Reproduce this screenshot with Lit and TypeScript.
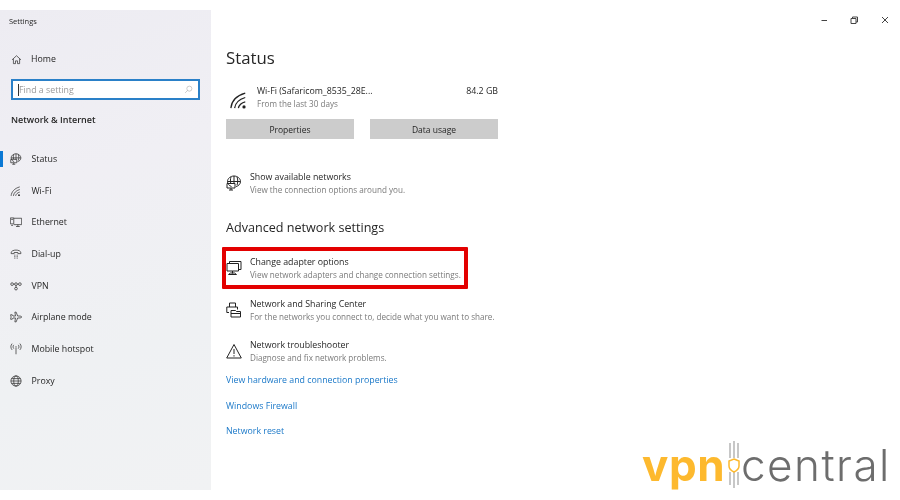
import { LitElement, html, css, svg } from "lit";
import { customElement } from "lit/decorators.js";

const icons: Record<string, unknown> = {
  home: svg`<path d="M1.500 8.500 8 2.500l6.500 6M3.500 7V14H6.500V10H9.500V14H12.500V7"/>`,
  status: svg`<path d="M5.500 11.500C3 10.800 1.500 8.500 1.500 6.500 1.500 3.500 4.500 1 8 1S14.500 3.500 14.500 6.500C14.500 9 12.500 11 10 11.500"/><path d="M1.500 6.500H14.500M8 1V9M5 2C4.300 4 4.300 6 4.700 8M11 2C12 4.500 12 7.500 11 10"/><path d="M1 8.500H9V13H1ZM3 15H7M5 13V15"/>`,
  wifi: svg`<path d="M1.500 14.500C2 9 6 4.500 13 2.500M4.500 14.500C5 10.500 8 7.500 13 6M7.500 14.500C7.800 12.500 10 10 13 9.500"/><circle cx="12" cy="13.500" r="1.300" fill="currentColor" stroke="none"/>`,
  ethernet: svg`<path d="M5 3H15.500V11.500H5M8 14H13M10.500 11.500V14"/><path d="M.5 2.500H5V10.500H.5ZM1.500 12.500H4M1.500 4.500H4"/>`,
  dial: svg`<path d="M1.500 6.500C1.500 1.500 14.500 1.500 14.500 6.500V7.500H10.500V6H5.500V7.500H1.500Z"/><path d="M5.500 9.500H6.500M7.500 9.500H8.500M9.500 9.500H10.500M5.500 11.500H6.500M7.500 11.500H8.500M9.500 11.500H10.500M5.500 13.500H6.500M7.500 13.500H8.500M9.500 13.500H10.500"/>`,
  vpn: svg`<circle cx="2.800" cy="5.500" r="1.800"/><circle cx="13.200" cy="5.500" r="1.800"/><circle cx="8" cy="5.500" r="1.800"/><circle cx="8" cy="11.500" r="1.800"/><path d="M8 7.300V9.700M4.600 5.500H6.200M9.800 5.500H11.400"/>`,
  plane: svg`<path d="M15.500 8C15.500 7 14 6.700 12 6.700H10.200L8.200 1.500H6.500L7.300 6.700H4L3 5H.8L1.500 8 .8 11H3L4 9.300H7.300L6.500 14.500H8.200L10.200 9.300H12C14 9.300 15.500 9 15.500 8Z"/>`,
  hotspot: svg`<path d="M8 6V15"/><circle cx="8" cy="5" r=".8" fill="currentColor" stroke="none"/><path d="M5 2.500C3.800 4 3.800 6 5 7.500M11 2.500C12.200 4 12.200 6 11 7.500M2.800 .8C.6 3.500.6 6.500 2.800 9.200M13.200 .8C15.400 3.500 15.400 6.500 13.200 9.200"/>`,
  globe: svg`<circle cx="8" cy="8" r="6.800"/><ellipse cx="8" cy="8" rx="3" ry="6.800"/><path d="M1.200 8H14.800M2.200 4.800H13.800M2.200 11.200H13.800"/>`,
  monitor: svg`<path d="M3.500 3.500V1.500H15V9.500H12.500"/><path d="M1 3.500H12.500V11H1ZM6.500 11V13.500M2.500 14.500H10.500L8.500 13H4.500Z"/>`,
  share: svg`<path d="M3.500 5V1H9.500V5"/><path d="M3 10.500H.8V5H11.500V7.500"/><path d="M5 8.500H9.500L10.500 9.500H14.500V15H5ZM5 11.500H14.500"/>`,
  warning: svg`<path d="M8 1.500 15.300 15H.7ZM8 6V11M8 12.200V13.500"/>`,
  search: svg`<circle cx="9.500" cy="6.500" r="4.500"/><path d="M6.300 9.700 2 14"/>`,
};

const icon = (name: string, size = 16) =>
  html`<svg class="ico" width=${size} height=${size} viewBox="0 0 16 16">${icons[name]}</svg>`;

const navItems = [
  ["status", "Status"],
  ["wifi", "Wi-Fi"],
  ["ethernet", "Ethernet"],
  ["dial", "Dial-up"],
  ["vpn", "VPN"],
  ["plane", "Airplane mode"],
  ["hotspot", "Mobile hotspot"],
  ["globe", "Proxy"],
];

@customElement("app-root")
export class AppRoot extends LitElement {
  static styles = css`
    :host {
      display: block;
      position: relative;
      width: 900px;
      height: 500px;
      overflow: hidden;
      background: #fff;
      font-family: "Open Sans", "Noto Sans", sans-serif;
      font-size: 8.800px;
      color: #262626;
      filter: blur(0.4px);
    }
    .ico {
      fill: none;
      stroke: currentColor;
      stroke-width: 1;
      flex: none;
      display: block;
    }
    .window {
      display: flex;
      height: 500px;
      padding: 10px 0;
      box-sizing: border-box;
    }

    /* left pane */
    .side {
      width: 211px;
      flex: none;
      background: linear-gradient(160deg, #edecf2 0%, #f0eff4 35%, #eff1f3 70%, #f1f2f3 100%);
      display: flex;
      flex-direction: column;
    }
    .app-title {
      font-size: 7.500px;
      height: 22px;
      line-height: 22px;
      padding-left: 9px;
      margin-bottom: 16px;
    }
    .home {
      display: flex;
      align-items: center;
      gap: 9px;
      height: 22px;
      padding-left: 11px;
    }
    .home .ico {
      width: 11px;
      height: 11px;
    }
    .search {
      margin: 9px 0 0 11px;
      width: 189px;
      height: 21px;
      box-sizing: border-box;
      border: 2px solid #2a80c8;
      background: #fff;
      display: flex;
      align-items: center;
      justify-content: space-between;
      padding: 0 5px 0 5px;
      color: #9a9a9a;
    }
    .search span {
      border-left: 1px solid #333;
      line-height: 12px;
    }
    .search .ico {
      width: 9px;
      height: 9px;
      color: #a5a5a5;
    }
    .section {
      font-size: 9px;
      font-weight: 600;
      padding-left: 11px;
      height: 14px;
      line-height: 14px;
      margin: 13px 0 16px;
    }
    .nav {
      display: flex;
      flex-direction: column;
    }
    .nav-row {
      position: relative;
      display: flex;
      align-items: center;
      gap: 9.500px;
      height: 31.700px;
      padding-left: 10px;
    }
    .nav-row .ico {
      width: 12px;
      height: 12px;
      color: #333;
    }
    .nav-row.on::before {
      content: "";
      position: absolute;
      left: 0;
      top: 8px;
      width: 3px;
      height: 16px;
      background: #0a78d4;
    }

    /* right pane */
    .main {
      flex: 1;
      display: flex;
      flex-direction: column;
      padding-left: 15px;
      position: relative;
    }
    h1 {
      margin: 34px 0 0;
      font-size: 16.800px;
      font-weight: 400;
      line-height: 28px;
    }
    .usage {
      width: 272px;
      height: 26px;
      margin-top: 12px;
      display: flex;
      gap: 8px;
      align-items: flex-end;
    }
    .usage .ico {
      width: 20px;
      height: 20px;
      color: #222;
      margin-left: 3px;
    }
    .usage-text {
      flex: 1;
      display: flex;
      justify-content: space-between;
      align-self: stretch;
    }
    .t {
      line-height: 13px;
      margin-top: 1px;
    }
    .s {
      line-height: 13px;
      margin-top: -1px;
      color: #7a7a7a;
      font-size: 8.150px;
    }
    .btns {
      display: flex;
      gap: 16px;
      margin-top: 9px;
    }
    .btn {
      width: 128px;
      height: 20px;
      line-height: 21px;
      text-align: center;
      background: #cccccc;
      font-size: 8.500px;
    }
    .opt {
      display: flex;
      align-items: center;
      gap: 8px;
      height: 26px;
      width: 280px;
    }
    .opt .ico {
      width: 16px;
      height: 16px;
      color: #222;
    }
    .first {
      margin-top: 31px;
    }
    h2 {
      margin: 19.500px 0 0;
      font-size: 12.600px;
      font-weight: 400;
      line-height: 24px;
      height: 24px;
    }
    .hl {
      position: relative;
      margin-top: 7px;
      height: 42px;
    }
    .hl::after {
      content: "";
      position: absolute;
      left: -4px;
      top: 0;
      width: 246px;
      height: 42px;
      box-sizing: border-box;
      border: 4px solid #e30000;
      border-radius: 1px;
    }
    .next {
      margin-top: 8px;
    }
    .next2 {
      margin-top: 15.500px;
    }
    a {
      color: #1a78c8;
      display: block;
      line-height: 13px;
      text-decoration: none;
    }
    .links {
      display: flex;
      flex-direction: column;
      gap: 12.700px;
      margin-top: 10px;
    }

    /* watermark */
    .logo {
      position: absolute;
      left: 642px;
      top: 440px;
      width: 256px;
      height: 50px;
      display: flex;
      align-items: center;
    }
    .vpn {
      font-family: Inter, Lato, sans-serif;
      font-size: 44px;
      font-weight: 700;
      line-height: 50px;
      color: #fdb92e;
      letter-spacing: 0.600px;
      width: 82px;
    }
    .mark {
      width: 20px;
      height: 50px;
      flex: none;
    }
    .central {
      font-family: Inter, Lato, sans-serif;
      font-size: 44px;
      font-weight: 300;
      line-height: 50px;
      color: #6d6d6d;
      letter-spacing: 1.500px;
      margin-left: -3px;
    }
    .controls {
      position: absolute;
      right: 0;
      top: 0;
      display: flex;
      color: #444;
    }
    .controls svg {
      width: 30px;
      height: 40px;
      fill: none;
      stroke: currentColor;
      stroke-width: 1;
      display: block;
    }
  `;

  render() {
    return html`
      <div class="window">
        <aside class="side">
          <div class="app-title">Settings</div>
          <div class="home">${icon("home")}<span>Home</span></div>
          <div class="search"><span>Find a setting</span>${icon("search")}</div>
          <div class="section">Network &amp; Internet</div>
          <nav class="nav">
            ${navItems.map(
              ([ic, label], i) =>
                html`<div class="nav-row ${i === 0 ? "on" : ""}">${icon(ic)}<span>${label}</span></div>`
            )}
          </nav>
        </aside>
        <main class="main">
          <h1>Status</h1>
          <div class="usage">
            ${icon("wifi")}
            <div class="usage-text">
              <div>
                <div class="t">Wi-Fi (Safaricom_8535_28E...</div>
                <div class="s">From the last 30 days</div>
              </div>
              <div class="t">84.2 GB</div>
            </div>
          </div>
          <div class="btns">
            <div class="btn">Properties</div>
            <div class="btn">Data usage</div>
          </div>
          <div class="opt first">
            ${icon("status")}
            <div>
              <div class="t">Show available networks</div>
              <div class="s">View the connection options around you.</div>
            </div>
          </div>
          <h2>Advanced network settings</h2>
          <div class="opt hl">
            ${icon("monitor")}
            <div>
              <div class="t">Change adapter options</div>
              <div class="s">View network adapters and change connection settings.</div>
            </div>
          </div>
          <div class="opt next">
            ${icon("share")}
            <div>
              <div class="t">Network and Sharing Center</div>
              <div class="s">For the networks you connect to, decide what you want to share.</div>
            </div>
          </div>
          <div class="opt next2">
            ${icon("warning")}
            <div>
              <div class="t">Network troubleshooter</div>
              <div class="s">Diagnose and fix network problems.</div>
            </div>
          </div>
          <div class="links">
            <a href="#">View hardware and connection properties</a>
            <a href="#">Windows Firewall</a>
            <a href="#">Network reset</a>
          </div>
        </main>
      </div>
      <div class="controls">
        <svg viewBox="0 0 30 40"><path d="M11.500 20.500H17"/></svg>
        <svg viewBox="0 0 30 40"><path d="M11 18.500H16V23.500H11ZM12.500 18.500V17H17.500V22H16"/></svg>
        <svg viewBox="0 0 30 40"><path d="M12 17 18 23M18 17 12 23"/></svg>
      </div>
      <div class="logo">
        <span class="vpn">vpn</span>
        <svg class="mark" viewBox="0 0 20 50">
          <path d="M6 3V18M10 1V18M14 3V18M6 32V45M10 32V48M14 32V45" stroke="#b5b5b5" stroke-width="1.500" fill="none"/>
          <path d="M10 19 15 21V26C15 29 12 31 10 32 8 31 5 29 5 26V21Z" stroke="#fdb92e" stroke-width="1.500" fill="#fff"/>
        </svg>
        <span class="central">central</span>
      </div>
    `;
  }
}
